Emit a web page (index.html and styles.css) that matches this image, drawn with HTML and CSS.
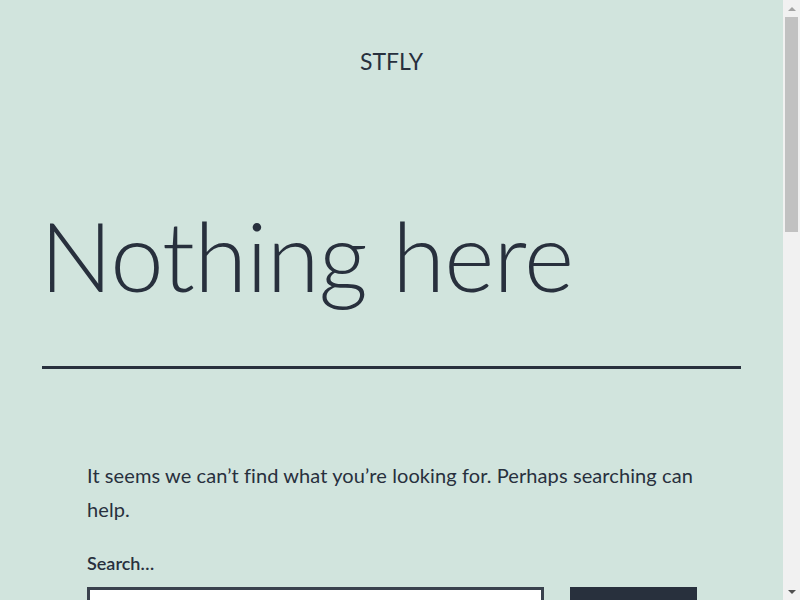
FILE: index.html
```html
<!DOCTYPE html>
<html lang="en">
<head>
  <meta charset="UTF-8" />
  <meta name="viewport" content="width=device-width, initial-scale=1.0"/>
  <title>Nothing here – STFLY</title>
  <link rel="stylesheet" href="styles.css">
</head>
<body>
  <header class="site-header">
    <p class="site-title">STFLY</p>
  </header>

  <main class="site-main">
    <header class="page-header">
      <h1 class="page-title">Nothing here</h1>
    </header>

    <div class="page-content">
      <p>It seems we can’t find what you’re looking for. Perhaps searching can help.</p>

      <form class="search-form" role="search">
        <label for="search-field">Search…</label>
        <input type="search" id="search-field" class="search-field">
        <button type="submit" class="search-submit">Search</button>
      </form>
    </div>
  </main>

  <footer class="site-footer">
    <div class="site-info">
      <p class="site-name">STFLY</p>
      <p class="powered-by">Proudly powered by WordPress</p>
    </div>
  </footer>

  <!-- window scrollbar -->
  <div class="scrollbar" aria-hidden="true">
    <span class="sb-button"><span class="sb-arrow up"></span></span>
    <span class="sb-track"><span class="sb-thumb"></span></span>
    <span class="sb-button"><span class="sb-arrow down"></span></span>
  </div>
</body>
</html>
```

FILE: styles.css
```css
body {
  margin: 0 17px 0 0;
  background-color: #d1e4dd;
  color: #28303d;
  font-family: Lato, 'Open Sans', sans-serif;
}

.site-header {
  padding-top: 48px;
  text-align: center;
}

.site-title {
  margin: 0;
  font-size: 23px;
  line-height: 26px;
  text-transform: uppercase;
}

.site-main {
  padding-top: 128px;
}

.page-header {
  margin: 0 42px;
  padding-bottom: 58px;
  border-bottom: 3px solid #28303d;
}

.page-title {
  margin: 0 0 0 -2px;
  font-size: 96px;
  font-weight: 300;
  line-height: 1.1;
  letter-spacing: -0.8px;
}

.page-content {
  padding: 89px 86px 0 87px;
}

.page-content p {
  margin: 0;
  font-size: 20px;
  line-height: 34px;
  letter-spacing: 0.09px;
}

.search-form {
  display: flex;
  flex-wrap: wrap;
  gap: 0 26px;
  margin-top: 26px;
}

.search-form label {
  width: 100%;
  margin-bottom: 12px;
  font-size: 18px;
  font-weight: 600;
  line-height: 23px;
}

.search-field {
  flex: 1;
  box-sizing: border-box;
  height: 56px;
  padding: 10px;
  border: 3px solid #39414d;
  border-radius: 0;
  background-color: #fff;
  font-family: inherit;
  font-size: 18px;
}

.search-submit {
  width: 127px;
  height: 56px;
  border: 3px solid #28303d;
  border-radius: 0;
  background-color: #28303d;
  color: #d1e4dd;
  font-family: inherit;
  font-size: 20px;
  font-weight: 500;
  cursor: pointer;
}

.site-footer {
  margin: 180px 42px 0;
  padding: 30px 0 640px;
  border-top: 3px solid #28303d;
}

.site-info p {
  margin: 0 0 12px;
  font-size: 16px;
}

.site-name {
  text-transform: uppercase;
  font-size: 24px !important;
}

/* fake window scrollbar, sits over the right edge */
.scrollbar {
  position: fixed;
  top: 0;
  right: 0;
  width: 17px;
  height: 100vh;
  display: flex;
  flex-direction: column;
  background-color: #f1f1f1;
}

.sb-button {
  height: 17px;
  display: flex;
  align-items: center;
  justify-content: center;
}

.sb-arrow {
  width: 0;
  height: 0;
  border-left: 4px solid transparent;
  border-right: 4px solid transparent;
}

.sb-arrow.up {
  border-bottom: 4px solid #a3a3a3;
}

.sb-arrow.down {
  border-top: 4px solid #505050;
}

.sb-track {
  flex: 1;
  display: flex;
  justify-content: center;
}

.sb-thumb {
  width: 13px;
  height: 215px;
  background-color: #c1c1c1;
}
```
